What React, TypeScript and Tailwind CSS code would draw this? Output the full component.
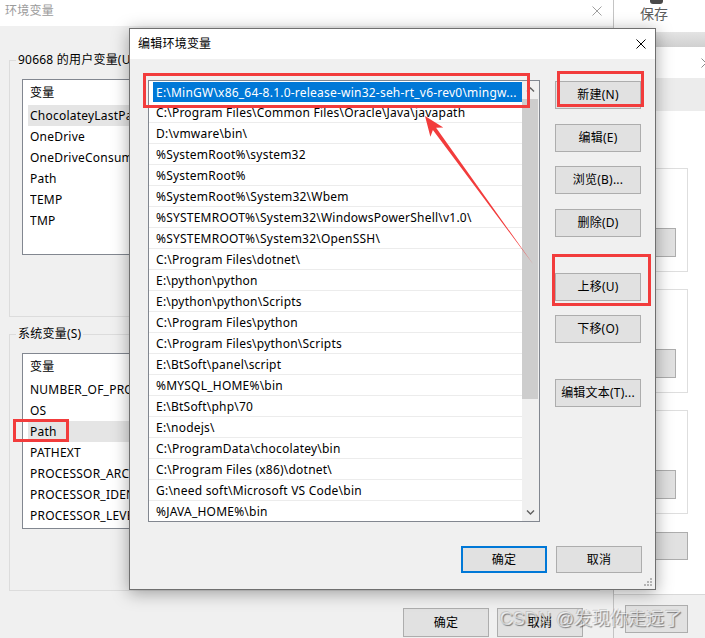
import React from 'react';

// ---------------------------------------------------------------------------
// Data
// ---------------------------------------------------------------------------

const PATH_ENTRIES = [
  'E:\\MinGW\\x86_64-8.1.0-release-win32-seh-rt_v6-rev0\\mingw...',
  'C:\\Program Files\\Common Files\\Oracle\\Java\\javapath',
  'D:\\vmware\\bin\\',
  '%SystemRoot%\\system32',
  '%SystemRoot%',
  '%SystemRoot%\\System32\\Wbem',
  '%SYSTEMROOT%\\System32\\WindowsPowerShell\\v1.0\\',
  '%SYSTEMROOT%\\System32\\OpenSSH\\',
  'C:\\Program Files\\dotnet\\',
  'E:\\python\\python',
  'E:\\python\\python\\Scripts',
  'C:\\Program Files\\python',
  'C:\\Program Files\\python\\Scripts',
  'E:\\BtSoft\\panel\\script',
  '%MYSQL_HOME%\\bin',
  'E:\\BtSoft\\php\\70',
  'E:\\nodejs\\',
  'C:\\ProgramData\\chocolatey\\bin',
  'C:\\Program Files (x86)\\dotnet\\',
  'G:\\need soft\\Microsoft VS Code\\bin',
  '%JAVA_HOME%\\bin',
];

const USER_VARS = ['ChocolateyLastPathUpdate', 'OneDrive', 'OneDriveConsumer', 'Path', 'TEMP', 'TMP'];

const SYSTEM_VARS = [
  'NUMBER_OF_PROCESSORS',
  'OS',
  'Path',
  'PATHEXT',
  'PROCESSOR_ARCHITECTURE',
  'PROCESSOR_IDENTIFIER',
  'PROCESSOR_LEVEL',
];

// ---------------------------------------------------------------------------
// Small glyphs
// ---------------------------------------------------------------------------

function CloseGlyph({ className }: { className?: string }) {
  return (
    <svg viewBox="0 0 10 10" className={className} fill="none" stroke="currentColor" strokeWidth={1}>
      <path d="M0.5 0.5L9.5 9.5M9.5 0.5L0.5 9.5" />
    </svg>
  );
}

function Chevron({ up }: { up?: boolean }) {
  return (
    <svg viewBox="0 0 9 5" className="h-[5px] w-[9px] text-[#606060]" fill="none" stroke="currentColor" strokeWidth={1.4}>
      <path d={up ? 'M1 4.5L4.5 1L8 4.5' : 'M1 0.5L4.5 4L8 0.5'} />
    </svg>
  );
}

function ResizeGrip() {
  const dots = [
    [8, 2],
    [5, 5],
    [8, 5],
    [2, 8],
    [5, 8],
    [8, 8],
  ];
  return (
    <svg viewBox="0 0 10 10" className="absolute bottom-[2px] right-[2px] h-[10px] w-[10px]">
      {dots.map(([x, y]) => (
        <rect key={`${x}-${y}`} x={x - 1} y={y - 1} width={2} height={2} fill="#b4b4b4" />
      ))}
    </svg>
  );
}

// ---------------------------------------------------------------------------
// Background window on the right edge
// ---------------------------------------------------------------------------

function BackWindow() {
  return (
    <div className="absolute left-[613px] top-0 flex h-[638px] w-[92px] flex-col bg-white">
      <div className="flex h-[32px] flex-col pl-[37px]">
        <div className="-mt-[4px] h-[8px] w-[13px] rounded-[3px] bg-[#4a4a4a]" />
        <span className="-ml-[10px] mt-[1px] text-[14px] leading-[18px] tracking-normal text-[#5c5c5c]">保存</span>
      </div>
      <div className="h-[15px] bg-gradient-to-b from-[#e4e4e4] to-[#d0d0d0]" />
      <div className="flex h-[31px] items-center justify-end">
        <CloseGlyph className="-mr-[6px] h-[10px] w-[10px] text-[#8a8a8a]" />
      </div>
      <div className="h-[33px] bg-[#ececec]" />
      <div className="flex flex-1 flex-col border-b border-[#d8d8d8] pl-[10px]">
        {[0, 1, 2].map((i) => (
          <div
            key={i}
            className={`flex h-[104px] w-[65px] flex-col border border-[#dedede] ${i === 0 ? 'mt-[57px]' : 'mt-[17px]'}`}
          >
            <div className="ml-[12px] mt-[59px] h-[29px] w-[40px] border border-[#adadad] bg-[#e1e1e1]" />
          </div>
        ))}
        <div className="mt-[18px] h-[28px] w-[65px] border border-[#adadad] bg-[#e1e1e1]" />
      </div>
      <div className="flex h-[43px] flex-col bg-[#f0f0f0] pl-[12px] pt-[10px]">
        <div className="h-[28px] w-[63px] border border-[#adadad] bg-[#e1e1e1]" />
      </div>
    </div>
  );
}

// ---------------------------------------------------------------------------
// 环境变量 window (behind)
// ---------------------------------------------------------------------------

function VarList({ names, highlight }: { names: string[]; highlight: number }) {
  return (
    <div className="ml-[12px] mt-[11px] h-[176px] w-[568px] overflow-hidden border border-[#828790] bg-white">
      <div className="flex h-[25px] items-center pl-[7px]">变量</div>
      {names.map((name, i) => (
        <div
          key={name}
          className={`ml-[5px] flex h-[21px] items-center pl-[2px] ${i === highlight ? 'bg-[#e5e5e5]' : ''}`}
        >
          {/* name column; its right part sits under the edit dialog */}
          <span className="w-[99px] overflow-hidden whitespace-nowrap">{name}</span>
        </div>
      ))}
    </div>
  );
}

function GroupBox({ label, className, children }: { label: string; className?: string; children: React.ReactNode }) {
  return (
    <div className={`h-[257px] w-[591px] border border-[#dcdcdc] ${className ?? ''}`}>
      <div className="-mt-[9px] ml-[6px] w-fit bg-[#f0f0f0] px-[2px] leading-[16px]">{label}</div>
      {children}
    </div>
  );
}

function EnvWindow() {
  return (
    <div className="absolute left-0 top-0 flex h-[638px] w-[614px] flex-col border-r border-[#c4c4c4] bg-[#f0f0f0]">
      <div className="flex h-[26px] shrink-0 items-center justify-between bg-white pl-[5px] pr-[11px]">
        <span className="-mt-[4px] leading-[16px] text-[#9b9b9b]">环境变量</span>
        <CloseGlyph className="-mt-[5px] h-[10px] w-[10px] text-[#a0a0a0]" />
      </div>
      <div className="flex flex-col px-[9px]">
        <GroupBox label="90668 的用户变量(U)" className="mt-[34px]">
          <VarList names={USER_VARS} highlight={0} />
        </GroupBox>
        <GroupBox label="系统变量(S)" className="mt-[17px]">
          <VarList names={SYSTEM_VARS} highlight={2} />
        </GroupBox>
        <div className="mt-[17px] flex gap-[8px] pl-[394px]">
          <button className="h-[29px] w-[86px] border border-[#adadad] bg-[#e1e1e1]">确定</button>
          <button className="h-[29px] w-[86px] border border-[#adadad] bg-[#e1e1e1]">取消</button>
        </div>
      </div>
    </div>
  );
}

// ---------------------------------------------------------------------------
// 编辑环境变量 dialog (front)
// ---------------------------------------------------------------------------

function SideButton({ label, className }: { label: string; className?: string }) {
  return (
    <button className={`h-[28px] w-[86px] border border-[#adadad] bg-[#e1e1e1] ${className ?? ''}`}>{label}</button>
  );
}

function PathList() {
  return (
    <div className="flex h-[442px] w-[392px] border border-[#828790] bg-white">
      <div className="flex w-[373px] flex-col overflow-hidden">
        {PATH_ENTRIES.map((entry, i) =>
          i === 0 ? (
            <div key={entry} className="flex h-[21px] shrink-0 pl-[4px] pt-[1px]">
              <div className="flex h-[20px] flex-1 items-center whitespace-nowrap bg-[#0078d7] pl-[3px] pt-[1px] text-white">
                {entry}
              </div>
            </div>
          ) : (
            <div
              key={entry}
              className="flex h-[21px] shrink-0 items-center whitespace-nowrap border-b border-[#ececec] pl-[7px] pt-[2px]"
            >
              {entry}
            </div>
          ),
        )}
      </div>
      <div className="flex w-[17px] flex-col bg-[#f0f0f0]">
        <div className="flex h-[17px] items-center justify-center">
          <Chevron up />
        </div>
        <div className="mt-[1px] h-[300px] w-[16px] bg-[#cdcdcd]" />
        <div className="flex-1" />
        <div className="flex h-[17px] items-center justify-center">
          <Chevron />
        </div>
      </div>
    </div>
  );
}

function EditDialog() {
  return (
    <div className="absolute left-[129px] top-[28px] flex h-[562px] w-[527px] flex-col border border-[#6f6f6f] bg-[#f0f0f0] shadow-[0_3px_16px_rgba(0,0,0,0.35)]">
      <div className="flex h-[30px] shrink-0 items-center justify-between bg-white pl-[8px] pr-[9px]">
        <span className="leading-[16px]">编辑环境变量</span>
        <CloseGlyph className="h-[10px] w-[10px] text-black" />
      </div>
      <div className="flex flex-1 flex-col pl-[18px] pr-[13px] pt-[21px]">
        <div className="flex gap-[15px]">
          <PathList />
          <div className="flex flex-col pt-[1px]">
            <SideButton label="新建(N)" />
            <SideButton label="编辑(E)" className="mt-[15px]" />
            <SideButton label="浏览(B)..." className="mt-[14px]" />
            <SideButton label="删除(D)" className="mt-[15px]" />
            <SideButton label="上移(U)" className="mt-[36px]" />
            <SideButton label="下移(O)" className="mt-[14px]" />
            <SideButton label="编辑文本(T)..." className="mt-[36px]" />
          </div>
        </div>
        <div className="mt-[24px] flex justify-end gap-[9px]">
          <button className="h-[27px] w-[86px] border-2 border-[#0078d7] bg-[#e1e1e1]">确定</button>
          <button className="h-[27px] w-[86px] border border-[#adadad] bg-[#e1e1e1]">取消</button>
        </div>
      </div>
      <ResizeGrip />
    </div>
  );
}

// ---------------------------------------------------------------------------
// Red markup drawn on top of the screenshot
// ---------------------------------------------------------------------------

function Annotations() {
  const red = '#f23c3c';
  return (
    <svg className="pointer-events-none absolute left-0 top-0 h-[638px] w-[705px]" viewBox="0 0 705 638">
      <rect x={144.5} y={74.5} width={384} height={32} fill="none" stroke={red} strokeWidth={3} />
      <rect x={558.5} y={72.5} width={84} height={33} fill="none" stroke={red} strokeWidth={3} />
      <rect x={553.5} y={255.5} width={96} height={49} fill="none" stroke={red} strokeWidth={3} />
      <rect x={14.5} y={420.5} width={53} height={20} fill="none" stroke={red} strokeWidth={3} />
      <polygon points="425,116 443.3,127.4 436.1,127.7 533,264 432.9,130.1 430.4,136.8" fill={red} />
    </svg>
  );
}

function Watermark() {
  return (
    <div className="pointer-events-none absolute left-[500px] top-[607px] font-['Liberation_Sans','Noto_Sans_CJK_SC',sans-serif] text-[18px] leading-[24px] tracking-normal whitespace-nowrap text-white/60 [text-shadow:1px_1px_1px_rgba(0,0,0,0.45),-1px_-1px_0_rgba(0,0,0,0.12)]">
      CSDN @发现你走远了
    </div>
  );
}

// ---------------------------------------------------------------------------
// App
// ---------------------------------------------------------------------------

export default function App() {
  return (
    <div className="relative h-[638px] w-[705px] overflow-hidden bg-white font-['Noto_Sans','Noto_Sans_CJK_SC',sans-serif] text-[12px] tracking-[0.22px] text-black">
      <BackWindow />
      <EnvWindow />
      <EditDialog />
      <Annotations />
      <Watermark />
    </div>
  );
}
